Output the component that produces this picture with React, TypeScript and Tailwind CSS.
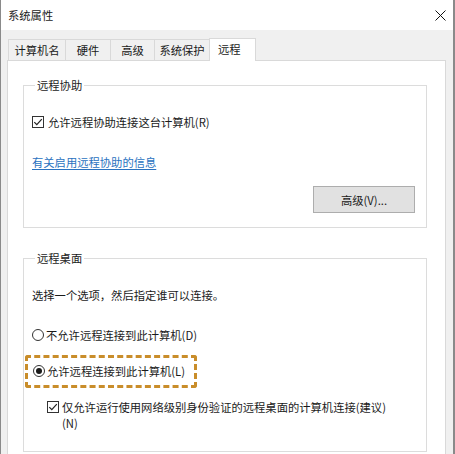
import React from 'react';

const tabs = [
  { label: '计算机名', w: 'w-[58px]' },
  { label: '硬件', w: 'w-[46px]' },
  { label: '高级', w: 'w-[45px]' },
  { label: '系统保护', w: 'w-[56px]' },
];

function CheckBox() {
  return (
    <svg width="12" height="12" viewBox="0 0 12 12" className="shrink-0">
      <rect x="0.5" y="0.5" width="11" height="11" fill="#fff" stroke="#333" />
      <path d="M2.3 6.2 L4.8 8.7 L9.8 3.2" fill="none" stroke="#222" strokeWidth="1.2" />
    </svg>
  );
}

function Radio({ checked }: { checked?: boolean }) {
  return (
    <svg width="12" height="12" viewBox="0 0 12 12" className="shrink-0">
      <circle cx="6" cy="6" r="5.5" fill="#fff" stroke="#333" />
      {checked && <circle cx="6" cy="6" r="3" fill="#1a1a1a" />}
    </svg>
  );
}

export default function App() {
  return (
    <div className="w-[455px] h-[454px] overflow-hidden bg-[#f0f0f0] border-l border-r-2 border-[#8a8a8a] font-['Noto_Sans_CJK_SC',sans-serif] text-[11.3px] leading-[16px] text-[#1a1a1a]">
      {/* title bar */}
      <div className="h-[30px] bg-white flex items-center justify-between pl-[7px] pr-[7px]">
        <span>系统属性</span>
        <svg width="11" height="11" viewBox="0 0 11 11">
          <path d="M0.5 0.5 L10.5 10.5 M10.5 0.5 L0.5 10.5" stroke="#111" strokeWidth="1" />
        </svg>
      </div>

      <div className="pl-[6px] pr-[7px] pt-[7px]">
        {/* tabs */}
        <div className="flex items-end pl-[1px] h-[23px] relative z-10">
          {tabs.map((t) => (
            <div
              key={t.label}
              className={`${t.w} h-[21px] flex items-center justify-center border border-b-0 border-[#d9d9d9] -ml-px first:ml-0 bg-[#f0f0f0]`}
            >
              {t.label}
            </div>
          ))}
          <div className="w-[47px] h-[23px] -mb-px flex items-start pt-[2px] pl-[8px] bg-white border border-b-0 border-[#d9d9d9] -ml-px">
            远程
          </div>
        </div>

        {/* panel */}
        <div className="bg-white border border-[#d9d9d9] h-[400px] pl-[15px] pr-[18px]">
          <fieldset className="mt-[16px] border border-[#dcdcdc] pl-[8px] pr-[11px] pb-[14px]">
            <legend className="ml-[3px] px-[2px]">远程协助</legend>
            <div className="flex items-center gap-[4px] mt-[21px]">
              <CheckBox />
              <span>允许远程协助连接这台计算机(R)</span>
            </div>
            <div className="mt-[24px]">
              <span className="text-[#2a72c0] underline underline-offset-2">有关启用远程协助的信息</span>
            </div>
            <div className="flex justify-end mt-[16px]">
              <button className="w-[102px] h-[27px] bg-[#e1e1e1] border border-[#adadad] flex items-center justify-center">
                高级(V)...
              </button>
            </div>
          </fieldset>

          <fieldset className="mt-[22px] border border-[#dcdcdc] pl-[8px] pr-[11px] pb-[20px]">
            <legend className="ml-[3px] px-[2px]">远程桌面</legend>
            <div className="mt-[21px]">选择一个选项，然后指定谁可以连接。</div>
            <div className="flex items-center gap-[2px] mt-[24px]">
              <Radio />
              <span>不允许远程连接到此计算机(D)</span>
            </div>
            <div className="mt-[12px] -ml-[7px] w-[172px] border-[3px] border-dashed border-[#c98d2a] rounded-[3px] pl-[5px] pt-[5px] pb-[6px]">
              <div className="flex items-center gap-[2px]">
                <Radio checked />
                <span>允许远程连接到此计算机(L)</span>
              </div>
            </div>
            <div className="flex items-start gap-[3px] mt-[11px] pl-[15px]">
              <div className="pt-[2px]">
                <CheckBox />
              </div>
              <span>
                仅允许运行使用网络级别身份验证的远程桌面的计算机连接(建议)
                <br />
                (N)
              </span>
            </div>
          </fieldset>
        </div>
      </div>
    </div>
  );
}
